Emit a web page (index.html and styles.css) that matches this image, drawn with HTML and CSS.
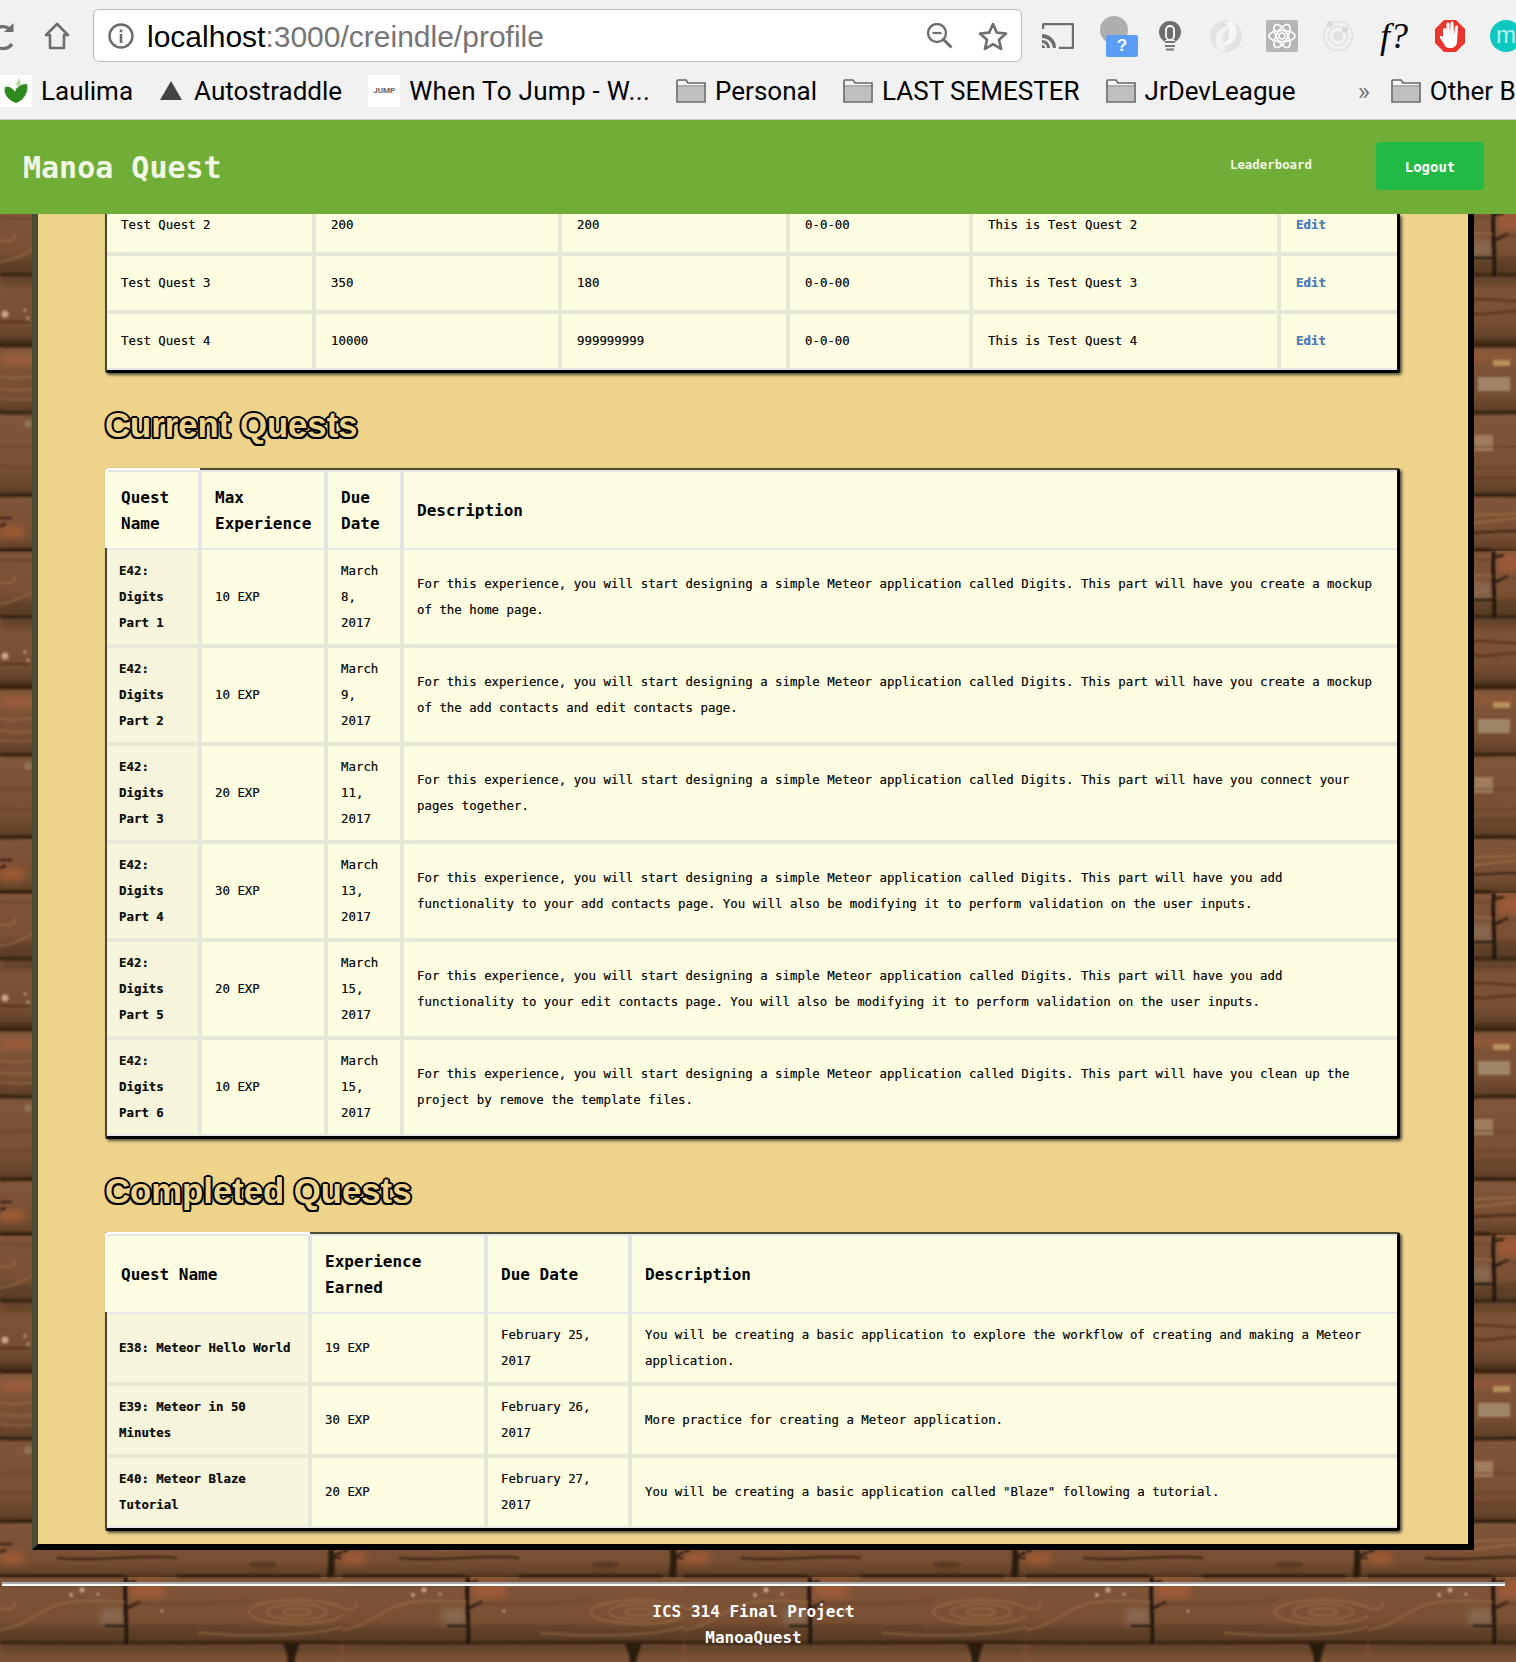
FILE: index.html

```html
<!DOCTYPE html>
<html lang="en">
<head>
    <meta charset="UTF-8">
    <meta name="viewport" content="width=device-width, initial-scale=1.0">
    <title>Manoa Quest</title>
    <link rel="stylesheet" href="styles.css">
</head>
<body>
    <div class="toolbar">
        <svg class="reload" width="14" height="30" viewBox="14 0 14 30"><path d="M24 8a11 11 0 1 0 2 15" fill="none" stroke="#6e6e6e" stroke-width="3.200"/><path d="M18 11h9.500V2z" fill="#6e6e6e"/></svg>
        <svg class="home" width="26" height="28" viewBox="0 0 26 28"><path d="M13 2L2 13h4v13h14V13h4z" fill="none" stroke="#6e6e6e" stroke-width="2.600" stroke-linejoin="round"/></svg>
        <div class="address">
            <svg class="info" width="26" height="28" viewBox="0 0 26 28"><circle cx="13" cy="14" r="11.500" fill="none" stroke="#6a6a6a" stroke-width="2.400"/><rect x="11.700" y="12" width="2.600" height="9" fill="#6a6a6a"/><rect x="11.700" y="7.500" width="2.600" height="2.800" fill="#6a6a6a"/></svg>
            <span class="url"><b>localhost</b>:3000/creindle/profile</span>
            <svg class="zoom" width="28" height="26" viewBox="0 0 28 26"><circle cx="11" cy="10" r="9" fill="none" stroke="#6e6e6e" stroke-width="2.400"/><path d="M6.500 10h9" stroke="#6e6e6e" stroke-width="2.200"/><path d="M17.500 16.500l8 8" stroke="#6e6e6e" stroke-width="3"/></svg>
            <svg class="star" width="30" height="28" viewBox="0 0 30 28"><path d="M15 2l3.800 8.600 9.200.9-7 6.200 2.100 9.200L15 22.100 6.900 27l2.100-9.300-7-6.200 9.200-.9z" fill="none" stroke="#6e6e6e" stroke-width="2.600" stroke-linejoin="round"/></svg>
        </div>
        <div class="extensions">
            <span class="ext"><svg width="32" height="26" viewBox="0 0 32 26"><path d="M1 6V3a2 2 0 0 1 2-2h27a1 1 0 0 1 1 1v22a1 1 0 0 1-1 1H17" fill="none" stroke="#6e6e6e" stroke-width="2.400"/><path d="M0 11a14 14 0 0 1 14 14h-3A11 11 0 0 0 0 15zM0 17a8 8 0 0 1 8 8H5a5 5 0 0 0-5-5zM0 22a3 3 0 0 1 3 3H0z" fill="#6e6e6e"/></svg></span>
            <span class="ext ext-help"><span class="help-dot"></span><span class="help-box">?</span></span>
            <span class="ext"><svg width="22" height="30" viewBox="0 0 22 30"><circle cx="11" cy="11" r="11" fill="#6f6f6f"/><rect x="7" y="5" width="8" height="14" rx="4" fill="none" stroke="#fff" stroke-width="1.800"/><rect x="6" y="19" width="10" height="3" fill="#f1f1f1"/><path d="M6 21h10M6 25h10M7 28.500h8" stroke="#777" stroke-width="2"/></svg></span>
            <span class="ext"><svg width="32" height="32" viewBox="0 0 32 32"><circle cx="16" cy="16" r="16" fill="#e2e2e2"/><path d="M21 1c8 4 8 19-3 24-3 1-6 0-7-2 3 1 7-1 8-7 1-6-1-11-4-14z" fill="#f6f6f6"/><path d="M11 31C3 27 3 12 14 7c3-1 6 0 7 2-3-1-7 1-8 7-1 6 1 11 4 14z" fill="#f2f2f2"/></svg></span>
            <span class="ext"><svg width="32" height="32" viewBox="0 0 32 32"><rect width="32" height="32" rx="2" fill="#b6b6b6"/><g fill="none" stroke="#fff" stroke-width="1.600"><ellipse cx="16" cy="16" rx="13" ry="5.500"/><ellipse cx="16" cy="16" rx="13" ry="5.500" transform="rotate(60 16 16)"/><ellipse cx="16" cy="16" rx="13" ry="5.500" transform="rotate(120 16 16)"/><circle cx="16" cy="16" r="3"/></g></svg></span>
            <span class="ext"><svg width="32" height="32" viewBox="0 0 32 32"><g fill="none" stroke="#e3e3e3" stroke-width="2"><circle cx="16" cy="16" r="14.500"/><circle cx="16" cy="16" r="9.500"/></g><circle cx="16" cy="16" r="5" fill="#e0e0e0"/><circle cx="8" cy="4" r="3" fill="#d8d8d8"/><circle cx="23" cy="10" r="3" fill="#d8d8d8"/></svg></span>
            <span class="ext ext-f">f?</span>
            <span class="ext"><svg width="30" height="32" viewBox="0 0 30 32"><path d="M9 0h12l9 9v14l-9 9H9l-9-9V9z" fill="#e8352e"/><path d="M8 17V9.500a1.500 1.500 0 0 1 3 0V15l.5-11a1.500 1.500 0 0 1 3 0l.5 10 .5-11a1.500 1.500 0 0 1 3 0l.5 12 1-8a1.500 1.500 0 0 1 3 0L22 22c-.5 4-3 6-7 6-3 0-5-1-6-4l-4-6c-1-2 1-3 2.500-1.500z" fill="#fff"/></svg></span>
            <span class="ext ext-m"><span class="m-dot">m</span></span>
        </div>
    </div>

    <div class="bookmarks">
        <span class="mark mark-leaf"><span class="favicon"><svg width="26" height="30" viewBox="0 0 26 30"><path d="M13 27C5 24 0 18 2 11c4-1 8 1 10 5 1-5 5-8 12-8 2 8-3 16-11 19z" fill="#2f8a1f"/><path d="M13 8l3-6 2 5-3 5z" fill="#b9d9a6"/></svg></span>Laulima</span>
        <span class="mark mark-triangle"><svg width="22" height="19" viewBox="0 0 22 19"><path d="M11 0l11 19H0z" fill="#444"/></svg>Autostraddle</span>
        <span class="mark mark-wide"><span class="favicon favicon-jump">JUMP</span>When To Jump - W...</span>
        <span class="mark"><svg class="folder" width="30" height="24" viewBox="0 0 30 24"><use href="#folder-shape"/></svg>Personal</span>
        <span class="mark"><svg class="folder" width="30" height="24" viewBox="0 0 30 24"><use href="#folder-shape"/></svg>LAST SEMESTER</span>
        <span class="mark"><svg class="folder" width="30" height="24" viewBox="0 0 30 24"><use href="#folder-shape"/></svg>JrDevLeague</span>
        <span class="more">»</span>
        <span class="mark"><svg class="folder" width="30" height="24" viewBox="0 0 30 24"><use href="#folder-shape"/></svg>Other Bookmarks</span>
    </div>
    <svg class="defs" width="0" height="0"><defs><g id="folder-shape"><path d="M1 23V2a1 1 0 0 1 1-1h8l2 3h17v19z" fill="#f4f4f4" stroke="#666" stroke-width="1.600"/><rect x="2" y="8" width="26" height="14" fill="#bfbfbf"/><path d="M1 7h28" stroke="#666" stroke-width="1"/></g></defs></svg>

    <nav class="navbar">
        <a class="brand">Manoa Quest</a>
        <a class="nav-link">Leaderboard</a>
        <a class="logout">Logout</a>
    </nav>

    <main class="panel">
        <table class="quest-table cut-table">
            <colgroup><col class="w209"><col class="w245"><col class="w228"><col class="w183"><col class="w308"><col></colgroup>
            <tbody>
                <tr class="cut-row"><td>Test Quest 2</td><td>200</td><td>200</td><td>0-0-00</td><td>This is Test Quest 2</td><td><a class="edit">Edit</a></td></tr>
                <tr><td>Test Quest 3</td><td>350</td><td>180</td><td>0-0-00</td><td>This is Test Quest 3</td><td><a class="edit">Edit</a></td></tr>
                <tr><td>Test Quest 4</td><td>10000</td><td>999999999</td><td>0-0-00</td><td>This is Test Quest 4</td><td><a class="edit">Edit</a></td></tr>
            </tbody>
        </table>

        <h2>Current Quests</h2>
        <table class="quest-table named">
            <colgroup><col class="w95"><col class="w126"><col class="w76"><col></colgroup>
            <thead>
                <tr><th>Quest Name</th><th>Max Experience</th><th>Due Date</th><th>Description</th></tr>
            </thead>
            <tbody>
                <tr><td>E42: Digits Part 1</td><td>10 EXP</td><td>March 8, 2017</td><td>For this experience, you will start designing a simple Meteor application called Digits. This part will have you create a mockup of the home page.</td></tr>
                <tr><td>E42: Digits Part 2</td><td>10 EXP</td><td>March 9, 2017</td><td>For this experience, you will start designing a simple Meteor application called Digits. This part will have you create a mockup of the add contacts and edit contacts page.</td></tr>
                <tr><td>E42: Digits Part 3</td><td>20 EXP</td><td>March 11, 2017</td><td>For this experience, you will start designing a simple Meteor application called Digits. This part will have you connect your pages together.</td></tr>
                <tr><td>E42: Digits Part 4</td><td>30 EXP</td><td>March 13, 2017</td><td>For this experience, you will start designing a simple Meteor application called Digits. This part will have you add functionality to your add contacts page. You will also be modifying it to perform validation on the user inputs.</td></tr>
                <tr><td>E42: Digits Part 5</td><td>20 EXP</td><td>March 15, 2017</td><td>For this experience, you will start designing a simple Meteor application called Digits. This part will have you add functionality to your edit contacts page. You will also be modifying it to perform validation on the user inputs.</td></tr>
                <tr><td>E42: Digits Part 6</td><td>10 EXP</td><td>March 15, 2017</td><td>For this experience, you will start designing a simple Meteor application called Digits. This part will have you clean up the project by remove the template files.</td></tr>
            </tbody>
        </table>

        <h2 class="h2-tight">Completed Quests</h2>
        <table class="quest-table named">
            <colgroup><col class="w205"><col class="w176"><col class="w144"><col></colgroup>
            <thead>
                <tr><th>Quest Name</th><th>Experience Earned</th><th>Due Date</th><th>Description</th></tr>
            </thead>
            <tbody>
                <tr><td>E38: Meteor Hello World</td><td>19 EXP</td><td>February 25, 2017</td><td>You will be creating a basic application to explore the workflow of creating and making a Meteor application.</td></tr>
                <tr><td>E39: Meteor in 50 Minutes</td><td>30 EXP</td><td>February 26, 2017</td><td>More practice for creating a Meteor application.</td></tr>
                <tr><td>E40: Meteor Blaze Tutorial</td><td>20 EXP</td><td>February 27, 2017</td><td>You will be creating a basic application called "Blaze" following a tutorial.</td></tr>
            </tbody>
        </table>
    </main>

    <footer class="footer">
        <hr>
        <p>ICS 314 Final Project</p>
        <p>ManoaQuest</p>
    </footer>
</body>
</html>
```

FILE: styles.css

```css
html, body {
    height: 1662px;
    overflow: hidden;
}
body {
    margin: 0;
    font-family: "DejaVu Sans Mono", "Liberation Mono", monospace;
    font-size: 12.4px;
    color: #111;
    background-color: #6f4a2e;
    background-image: url("data:image/svg+xml;charset=utf8,<svg xmlns='http://www.w3.org/2000/svg' width='342' height='342'><defs><linearGradient id='p' x1='0' y1='0' x2='0' y2='1'><stop offset='0' stop-color='%237f5639'/><stop offset='.7' stop-color='%23784f33'/><stop offset='.92' stop-color='%23634229'/><stop offset='1' stop-color='%23473019'/></linearGradient><filter id='b'><feGaussianBlur stdDeviation='.9'/></filter><filter id='c'><feGaussianBlur stdDeviation='3.500'/></filter></defs><rect y='4' width='342' height='67' fill='url(%23p)'/><rect y='71' width='342' height='83' fill='url(%23p)'/><rect y='154' width='342' height='55' fill='url(%23p)'/><rect y='209' width='342' height='66' fill='url(%23p)'/><rect y='275' width='342' height='67' fill='url(%23p)'/><rect y='0' width='342' height='4' fill='%23473019'/><g filter='url(%23c)'><rect x='0' y='12' width='60' height='12' fill='%23a5603a' opacity='.7'/><rect x='98' y='12' width='50' height='8' fill='%239c5a36' opacity='.7'/><rect x='0' y='184' width='24' height='12' fill='%23a85c34' opacity='.8'/><rect x='337' y='184' width='5' height='12' fill='%23a85c34' opacity='.8'/><rect x='130' y='212' width='34' height='18' fill='%23a85c34' opacity='.75'/><rect x='0' y='258' width='342' height='16' fill='%23523622' opacity='.5'/><rect x='0' y='278' width='342' height='6' fill='%233e2816' opacity='.6'/><rect x='100' y='240' width='24' height='16' fill='%23968068' opacity='.5'/></g><g filter='url(%23b)'><path d='M0 71C80 73 200 69 342 71M0 154C100 152 220 156 342 154M0 275C90 277 240 274 342 275' fill='none' stroke='%232e1c10' stroke-width='2.500' opacity='.9'/><path d='M0 208H123M177 208H320M0 4H342' stroke='%232e1c10' stroke-width='2.500'/><path d='M0 34C20 40 30 30 60 36M0 46C24 52 36 42 70 50M0 56C20 60 40 54 60 60' fill='none' stroke='%23a8744a' stroke-width='2' opacity='.5'/><rect x='125' y='18' width='17' height='6' fill='%23b8905c'/><rect x='110' y='35' width='32' height='14' fill='%23a08468'/><rect x='106' y='93' width='19' height='16' fill='%23a07c5a'/><circle cx='28' cy='82' r='4' fill='%23a08468' opacity='.6'/><path d='M0 105C100 104 220 107 342 105M0 125C120 127 220 123 342 125M98 136H160' fill='none' stroke='%2358382a' stroke-width='1.500' opacity='.6'/><path d='M0 176H12M57 190C100 194 140 186 177 190M333 190H342' fill='none' stroke='%233a2414' stroke-width='2'/><ellipse cx='263' cy='197' rx='14' ry='3.500' fill='%235a3a20'/><path d='M98 176C120 168 140 176 150 170M98 182L150 176' stroke='%23a8784c' stroke-width='2' fill='none' opacity='.6'/><path d='M329 155C327 170 330 185 327 209L334 209C336 190 332 172 332 155z' fill='%232b1a10'/><path d='M334 188L342 184M0 184L6 182' stroke='%232b1a10' stroke-width='2'/><path d='M126 209C123 230 128 250 126 275' fill='none' stroke='%23201208' stroke-width='3.500'/><path d='M127 240L140 234M127 215L136 213M105 258H125' stroke='%23201208' stroke-width='2'/><g fill='none' stroke='%23a4744c' stroke-width='2' opacity='.6'><ellipse cx='297' cy='244' rx='48' ry='12'/><ellipse cx='297' cy='244' rx='30' ry='8'/><ellipse cx='297' cy='244' rx='14' ry='3.500'/><path d='M0 262C30 258 40 238 70 234C90 232 110 232 124 234M198 265C240 268 320 270 350 256M0 240C12 244 16 238 14 234'/></g><path d='M0 218C60 220 100 216 124 218M130 236C170 234 210 238 250 232M130 258C170 256 200 260 240 258' fill='none' stroke='%2358382a' stroke-width='1.500' opacity='.6'/><g fill='%23c8a488'><circle cx='71' cy='227' r='2'/><circle cx='82' cy='222' r='2.500'/><circle cx='98' cy='226' r='1.500'/><circle cx='162' cy='243' r='1.500'/><circle cx='5' cy='314' r='3.500'/><circle cx='25' cy='310' r='1.500'/><circle cx='28' cy='318' r='1.500'/></g><path d='M282 275C288 284 288 292 288 300L294 300C294 292 296 284 300 275z' fill='%232b1a10'/><path d='M0 322H30M98 300C120 296 140 304 160 300M98 312C120 318 140 308 160 312' fill='none' stroke='%23402816' stroke-width='2' opacity='.7'/></g></svg>");
}

/* browser chrome */
.toolbar {
    height: 62px;
    display: flex;
    align-items: center;
    background: #f1f1f1;
    overflow: hidden;
    font-family: "Liberation Sans", Arial, sans-serif;
}
.reload {
    flex: none;
    margin-top: 9px;
}
.home {
    flex: none;
    margin-left: 30px;
    margin-top: 9px;
}
.address {
    flex: none;
    box-sizing: border-box;
    width: 929px;
    height: 53px;
    margin-left: 23px;
    margin-top: 9px;
    padding: 0 13px 0 14px;
    display: flex;
    align-items: center;
    background: #fff;
    border: 1px solid #bcbcbc;
    border-radius: 6px;
}
.url {
    flex: 1;
    margin-left: 13px;
    padding-top: 3px;
    font-size: 30px;
    color: #757575;
}
.url b {
    font-weight: normal;
    color: #000;
}
.star {
    margin-left: 24px;
}
.extensions {
    flex: none;
    display: flex;
    margin-left: 8px;
    margin-top: 9px;
}
.ext {
    flex: none;
    width: 56px;
    height: 40px;
    display: flex;
    align-items: center;
    justify-content: center;
    position: relative;
}
.help-dot {
    position: absolute;
    left: 14px;
    top: 0;
    width: 28px;
    height: 28px;
    border-radius: 50%;
    background: #aeaeae;
}
.help-box {
    position: absolute;
    left: 20px;
    top: 19px;
    width: 32px;
    height: 22px;
    border-radius: 2px;
    background: #5a9ef5;
    color: #fff;
    font-size: 17px;
    font-weight: bold;
    line-height: 22px;
    text-align: center;
}
.ext-f {
    font-family: "Liberation Serif", serif;
    font-style: italic;
    font-size: 36px;
    color: #000;
}
.ext-m {
    justify-content: flex-start;
    padding-left: 12px;
    box-sizing: border-box;
}
.m-dot {
    flex: none;
    width: 32px;
    height: 32px;
    border-radius: 50%;
    background: #0cc8c0;
    color: #b8f0ee;
    font-size: 24px;
    line-height: 30px;
    text-align: center;
}

.bookmarks {
    box-sizing: border-box;
    height: 58px;
    display: flex;
    align-items: center;
    gap: 26px;
    background: #f1f1f1;
    border-bottom: 1px solid #c8c8c8;
    font-family: Roboto, "Liberation Sans", Arial, sans-serif;
    font-size: 26px;
    color: #000;
    overflow: hidden;
    white-space: nowrap;
}
.mark {
    flex: none;
    display: flex;
    align-items: center;
    gap: 9px;
}
.mark-leaf {
    margin-right: 1px;
}
.mark-triangle {
    gap: 12px;
}
.mark-wide {
    letter-spacing: .3px;
}
.favicon {
    flex: none;
    width: 32px;
    height: 32px;
    display: flex;
    align-items: center;
    justify-content: center;
    background: #fff;
}
.favicon-jump {
    font-size: 8px;
    font-weight: bold;
    letter-spacing: 0;
    color: #666;
}
.more {
    flex: none;
    margin-left: 36px;
    margin-right: -5px;
    color: #777;
    font-size: 26px;
}
.defs {
    position: absolute;
}

/* site navbar */
.navbar {
    height: 94px;
    display: flex;
    align-items: center;
    background: #70ae37;
    color: #f3f7e6;
    font-weight: bold;
}
.brand {
    margin-left: 23px;
    margin-right: auto;
    font-size: 30px;
}
.nav-link {
    margin-right: 64px;
    padding-bottom: 6px;
}
.logout {
    box-sizing: border-box;
    width: 108px;
    height: 48px;
    margin-right: 32px;
    margin-bottom: 2px;
    background: #21ba45;
    border-radius: 4px;
    color: #fff;
    font-size: 14px;
    line-height: 50px;
    text-align: center;
}

/* tan panel */
.panel {
    margin: 0 42px 0 32px;
    padding: 0 68px 13px 67px;
    background: #eed38b;
    border-left: 6px solid #4b4b33;
    border-right: 6px solid #000;
    border-bottom: 6px solid #000;
}
h2 {
    margin: 30px 0 21px;
    font-family: "Liberation Sans", Arial, sans-serif;
    font-size: 34.700px;
    font-weight: bold;
    line-height: 44px;
    color: #eed38b;
    text-shadow: -2px 0 0 #000, 2px 0 0 #000, 0 -2px 0 #000, 0 2px 0 #000, -1.500px -1.500px 0 #000, 1.500px -1.500px 0 #000, -1.500px 1.500px 0 #000, 1.500px 1.500px 0 #000;
}
.h2-tight {
    margin-bottom: 19px;
}

/* tables */
.quest-table {
    width: 100%;
    table-layout: fixed;
    border-collapse: separate;
    border-spacing: 0;
    background: #fdfde2;
    border-top: 2px solid #4b4b33;
    border-left: 2px solid #4b4b33;
    border-right: 3px solid #000;
    border-bottom: 3px solid #000;
    border-radius: 3px;
    box-shadow: 2px 2px 3px #54543c;
}
.cut-table {
    border-top: 0;
    border-radius: 0 0 3px 3px;
}
.w209 { width: 209px; }
.w245 { width: 246px; }
.w228 { width: 228px; }
.w183 { width: 183px; }
.w308 { width: 308px; }
.w95 { width: 95px; }
.w126 { width: 126px; }
.w76 { width: 76px; }
.w205 { width: 205px; }
.w176 { width: 176px; }
.w144 { width: 144px; }

td, th {
    box-sizing: border-box;
    padding: 16px 13px;
    text-align: left;
    vertical-align: middle;
    border-right: 4px solid #e7e7d8;
    border-bottom: 4px solid #e7e7d8;
    line-height: 22px;
}
td {
    text-shadow: 0 0 .5px rgba(0, 0, 0, .6);
}
td:last-child, th:last-child {
    border-right: 0;
}
tbody tr:last-child td {
    border-bottom: 2px solid #e7e7e7;
}
.cut-table td {
    padding-left: 15px;
}
.cut-table td:first-child {
    padding-left: 14px;
}
.cut-row td {
    padding-top: 0;
}
.edit {
    color: #4a80c4;
    font-weight: bold;
}

.named th {
    padding: 13px 13px 11px;
    font-size: 16px;
    line-height: 26px;
    border-top: 2px solid #e7e7e7;
    border-right-color: #e4e4e4;
    border-bottom-width: 2px;
    border-bottom-color: #e7e7e7;
    color: #000;
}
.named th:first-child {
    padding-left: 14px;
    border-top-left-radius: 3px;
    box-shadow: -2px -2px 0 #fff;
}
.named td {
    padding-top: 8px;
    padding-bottom: 8px;
    line-height: 26px;
}
.named td:first-child {
    padding-left: 12px;
    background: #f6f5dc;
    font-weight: bold;
}

.footer {
    margin: 32px 11px 0 2px;
    color: #fff;
    font-size: 16px;
    font-weight: bold;
    line-height: 26px;
    text-align: center;
}
.footer hr {
    margin: 0 0 13px;
    border: 0;
    border-top: 2px solid #aaa;
    border-bottom: 2px solid #fff;
}
.footer p {
    margin: 0;
}
```
